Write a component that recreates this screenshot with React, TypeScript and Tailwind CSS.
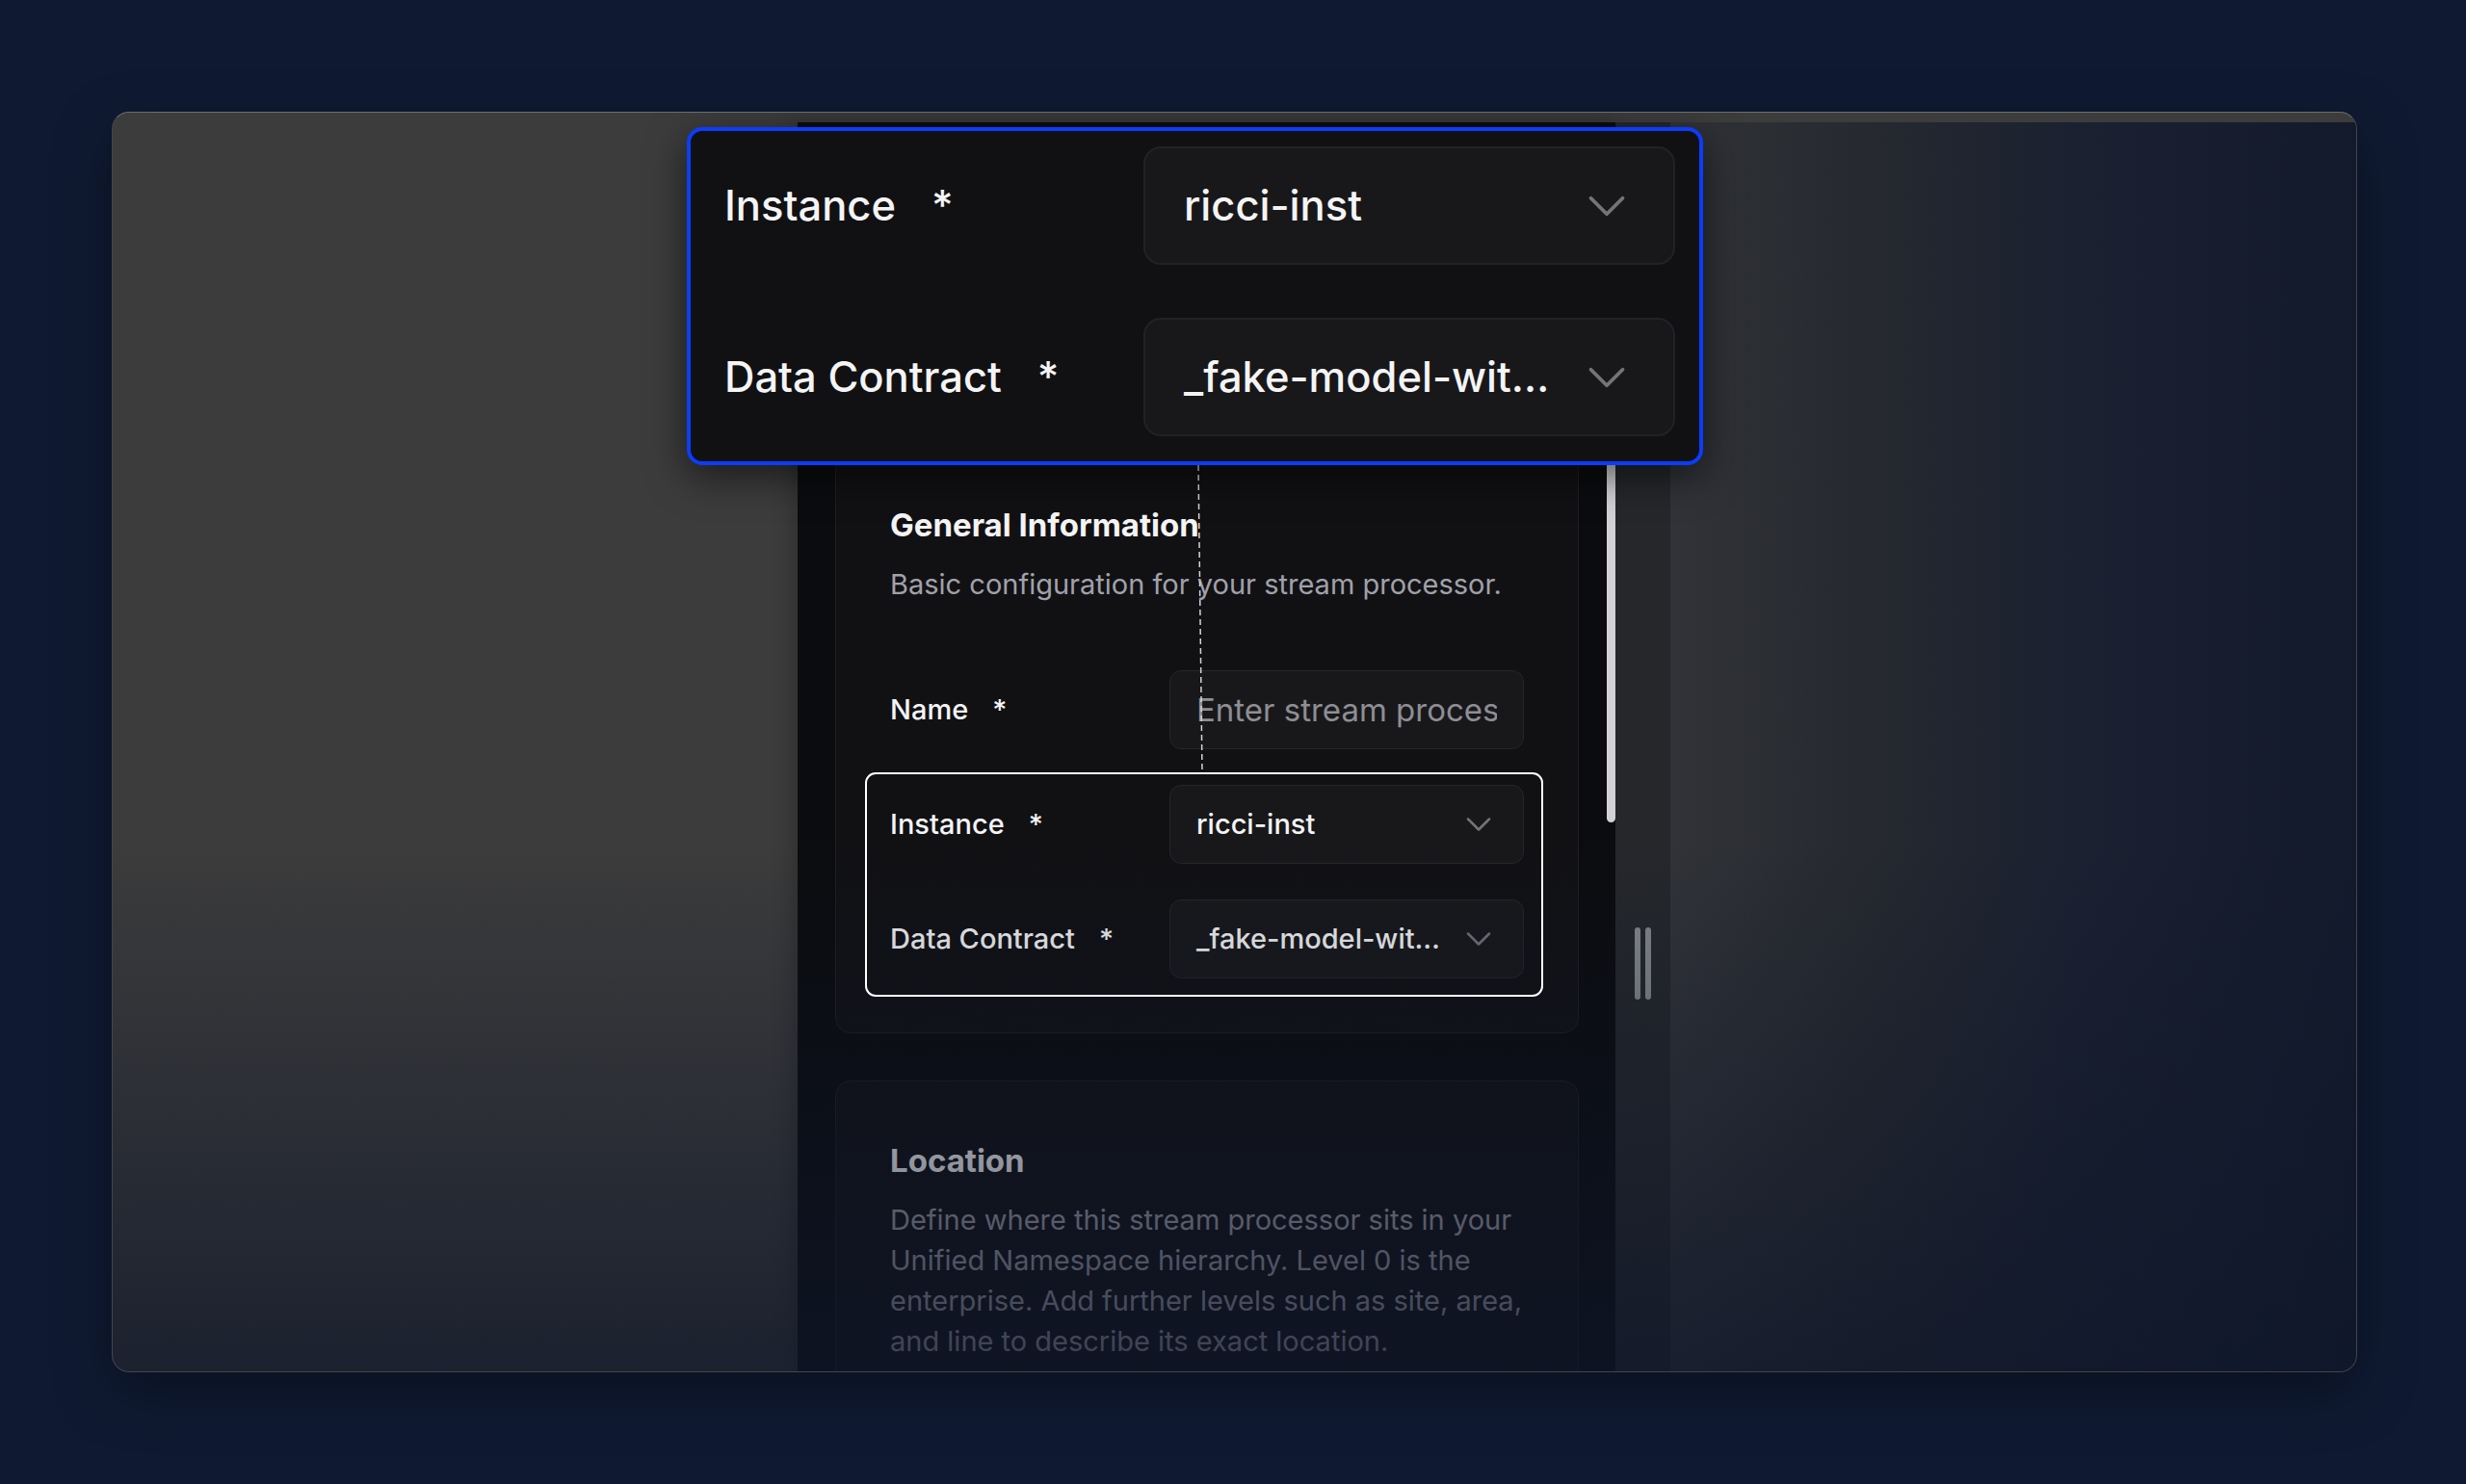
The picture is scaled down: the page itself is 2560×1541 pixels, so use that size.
import React from "react";

function Chevron({ size }: { size: number }) {
  return (
    <svg
      width={size}
      height={size}
      viewBox="0 0 24 24"
      fill="none"
      stroke="currentColor"
      strokeWidth={1.4}
      strokeLinecap="round"
      strokeLinejoin="round"
      className="shrink-0 text-[#737378]"
    >
      <path d="m6 9 6 6 6-6" />
    </svg>
  );
}

function SmallLabel({ text }: { text: string }) {
  return (
    <div className="w-[290px] shrink-0 flex items-center text-[29px] font-medium text-[#f4f4f5]">
      <span>{text}</span>
      <span className="ml-[25px]">*</span>
    </div>
  );
}

function SmallSelect({ value }: { value: string }) {
  return (
    <div className="w-[368px] h-[82px] shrink-0 rounded-[12px] border border-[#25252a] bg-[#18181b] flex items-center justify-between pl-[27px] pr-[24px]">
      <span className="text-[29px] font-medium text-[#f4f4f5] whitespace-nowrap">{value}</span>
      <Chevron size={44} />
    </div>
  );
}

function BigLabel({ text }: { text: string }) {
  return (
    <div className="w-[435px] shrink-0 flex items-center text-[43.5px] font-medium text-[#f4f4f5]">
      <span>{text}</span>
      <span className="ml-[37px]">*</span>
    </div>
  );
}

function BigSelect({ value }: { value: string }) {
  return (
    <div className="w-[552px] h-[123px] shrink-0 rounded-[18px] border-2 border-[#222226] bg-[#18181b] flex items-center justify-between pl-[40px] pr-[36px]">
      <span className="text-[43.5px] font-medium text-[#f4f4f5] whitespace-nowrap">{value}</span>
      <Chevron size={66} />
    </div>
  );
}

export default function App() {
  return (
    <div className="min-h-[1541px] w-full bg-[#0f1a32] pt-[116px] pl-[116px] font-['Inter','Noto_Sans',sans-serif]">
      <div className="relative w-[2331px] h-[1309px] rounded-[18px] border border-white/[0.05] border-t-white/25 bg-[#3c3c3c] overflow-hidden flex flex-col pt-[10px] shadow-[0_20px_60px_rgba(0,0,0,0.35)]">
        <div className="flex flex-1 min-h-0">
          {/* left empty area */}
          <div className="w-[711px] shrink-0" />

          {/* main column */}
          <div className="w-[849px] shrink-0 bg-[#0b0c0f] flex overflow-hidden shadow-[-6px_0_20px_rgba(0,0,0,0.2)]">
            <div className="flex-1 pl-[39px] pr-[29px] pt-[335px] flex flex-col gap-[49px]">
              {/* General Information card */}
              <div className="rounded-[16px] border border-[#1e1f23] bg-[#111114] px-[56px] pt-[62px] pb-[56px]">
                <h2 className="text-[33px] leading-[40px] font-bold text-[#f4f4f5]">
                  General Information
                </h2>
                <p className="mt-[21px] text-[29px] leading-[42px] text-[#a1a1aa]">
                  Basic configuration for your stream processor.
                </p>
                <div className="mt-[68px] flex flex-col gap-[37px]">
                  <div className="flex items-center h-[82px]">
                    <SmallLabel text="Name" />
                    <input
                      readOnly
                      placeholder="Enter stream processor name"
                      className="w-[368px] h-[82px] shrink-0 rounded-[12px] border border-[#25252a] bg-[#18181b] px-[27px] text-[33px] text-[#f4f4f5] placeholder:text-[#8e8e93] outline-none"
                    />
                  </div>
                  <div className="relative flex flex-col gap-[37px]">
                    <div className="absolute top-[-13px] left-[-26px] right-[-20px] bottom-[-19px] rounded-[11px] border-2 border-white z-20 pointer-events-none" />
                    <div className="flex items-center h-[82px]">
                      <SmallLabel text="Instance" />
                      <SmallSelect value="ricci-inst" />
                    </div>
                    <div className="flex items-center h-[82px]">
                      <SmallLabel text="Data Contract" />
                      <SmallSelect value="_fake-model-wit…" />
                    </div>
                  </div>
                </div>
              </div>

              {/* Location card */}
              <div className="rounded-[16px] border border-[#1e1f23] bg-[#111114] px-[56px] pt-[62px] pb-[200px]">
                <h2 className="text-[33px] leading-[40px] font-bold text-[#f4f4f5]">Location</h2>
                <p className="mt-[21px] text-[29px] leading-[42px] text-[#a1a1aa]">
                  Define where this stream processor sits in your Unified Namespace hierarchy. Level 0 is the
                  enterprise. Add further levels such as site, area, and line to describe its exact location.
                </p>
              </div>
            </div>

            {/* scrollbar */}
            <div className="w-[9px] shrink-0 pt-[100px]">
              <div className="h-[627px] rounded-full bg-[#d1d1d6]" />
            </div>
          </div>

          {/* resizer strip */}
          <div className="w-[57px] shrink-0 bg-[#25272b] flex justify-center gap-[5px] pt-[836px]">
            <div className="w-[6px] h-[75px] rounded-full bg-[#85888d]" />
            <div className="w-[6px] h-[75px] rounded-full bg-[#85888d]" />
          </div>

          {/* right area */}
          <div className="flex-1 bg-[linear-gradient(to_right,#313338_0%,#26292f_28%,#1b2131_58%,#131a2c_100%)]" />
        </div>

        {/* bottom fade */}
        <div className="absolute inset-0 z-10 pointer-events-none bg-[linear-gradient(to_bottom,transparent_58%,rgba(14,22,42,0.7)_100%)]" />

        {/* dashed connector */}
        <svg
          className="absolute left-[1123px] top-[366px] z-20 pointer-events-none"
          width="12"
          height="320"
          viewBox="0 0 12 320"
        >
          <line x1="4" y1="0" x2="8" y2="320" stroke="#d4d4d8" strokeWidth="1.5" strokeDasharray="6 4" />
        </svg>

        {/* magnified callout */}
        <div className="absolute left-[596px] top-[15px] z-30 w-[1055px] h-[351px] rounded-[16px] border-4 border-[#0b3cff] bg-[#111113] pl-[35px] pt-[16px] flex flex-col gap-[55px] shadow-[0_12px_40px_rgba(0,0,0,0.55)]">
          <div className="flex items-center h-[123px]">
            <BigLabel text="Instance" />
            <BigSelect value="ricci-inst" />
          </div>
          <div className="flex items-center h-[123px]">
            <BigLabel text="Data Contract" />
            <BigSelect value="_fake-model-wit…" />
          </div>
        </div>
      </div>
    </div>
  );
}
